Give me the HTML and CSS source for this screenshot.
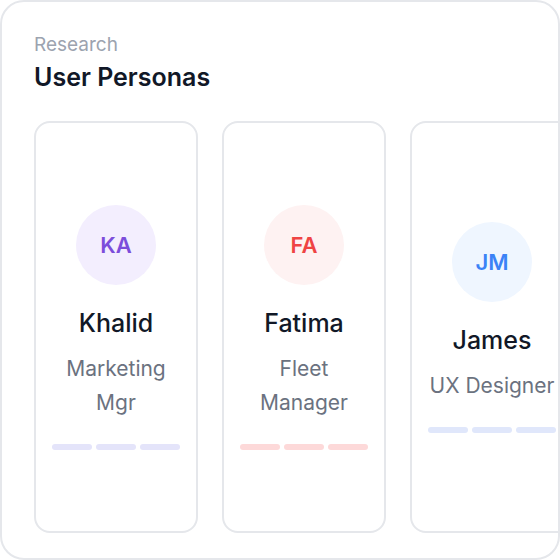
FILE: index.html
```html
<!DOCTYPE html>
<html>
<head>
<meta charset="utf-8">
<link rel="stylesheet" href="styles.css">
</head>
<body>
<div class="panel">
  <div class="header">
    <div class="eyebrow">Research</div>
    <div class="title">User Personas</div>
  </div>
  <div class="row">
    <div class="persona">
      <div class="avatar violet">KA</div>
      <div class="name">Khalid</div>
      <div class="role">Marketing Mgr</div>
      <div class="bars"><span class="bar violet-bar"></span><span class="bar violet-bar"></span><span class="bar violet-bar"></span></div>
    </div>
    <div class="persona">
      <div class="avatar red">FA</div>
      <div class="name">Fatima</div>
      <div class="role">Fleet Manager</div>
      <div class="bars"><span class="bar red-bar"></span><span class="bar red-bar"></span><span class="bar red-bar"></span></div>
    </div>
    <div class="persona">
      <div class="avatar blue">JM</div>
      <div class="name">James</div>
      <div class="role">UX Designer</div>
      <div class="bars"><span class="bar blue-bar"></span><span class="bar blue-bar"></span><span class="bar blue-bar"></span></div>
    </div>
  </div>
</div>
</body>
</html>
```
FILE: styles.css
```css
* { box-sizing: border-box; }
html, body { margin: 0; padding: 0; background: #ffffff; }
body { font-family: Inter, "Noto Sans", sans-serif; }
.panel {
  width: 560px;
  height: 560px;
  border: 2px solid #e5e7eb;
  border-radius: 24px;
  padding: 30px 0 0 32px;
  overflow: hidden;
  background: #fff;
}
.header { display: flex; flex-direction: column; }
.eyebrow { font-size: 19px; line-height: 26px; color: #9ca3af; }
.title { font-size: 25px; line-height: 32px; font-weight: 600; color: #111827; margin-top: 3px; }
.row { display: flex; gap: 24px; margin-top: 28px; }
.persona {
  flex: 0 0 164px;
  height: 412px;
  border: 2px solid #e5e7eb;
  border-radius: 16px;
  display: flex;
  flex-direction: column;
  align-items: center;
  justify-content: center;
  padding: 0 14px;
  text-align: center;
}
.avatar {
  width: 80px; height: 80px; border-radius: 50%;
  display: flex; align-items: center; justify-content: center;
  font-size: 22px; font-weight: 600;
}
.violet { background: #f3eefe; color: #7c4ddb; }
.red { background: #fef2f2; color: #ef4444; }
.blue { background: #eff6ff; color: #3b82f6; }
.name { font-size: 25px; line-height: 32px; font-weight: 500; color: #111827; margin-top: 22px; }
.role { font-size: 21px; line-height: 34px; color: #6b7280; margin-top: 13px; }
.bars { display: flex; gap: 4px; margin-top: 24px; }
.bar { width: 40px; height: 6px; border-radius: 3px; flex: 0 0 40px; }
.violet-bar { background: #e4e4fa; }
.red-bar { background: #fdd9d9; }
.blue-bar { background: #e0e7fb; }
```
